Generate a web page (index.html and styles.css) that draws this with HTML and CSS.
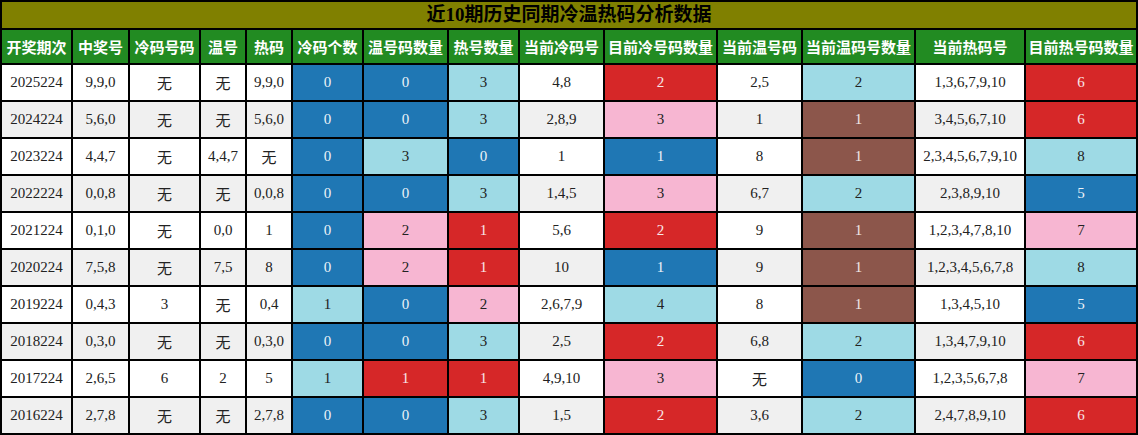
FILE: index.html
```html
<!DOCTYPE html>
<html lang="zh">
<head>
<meta charset="utf-8">
<title>近10期历史同期冷温热码分析数据</title>
<link rel="stylesheet" href="styles.css">
</head>
<body>
<table class="data">
<colgroup>
<col class="c71"><col class="c57"><col class="c71"><col class="c46"><col class="c46"><col class="c71"><col class="c85"><col class="c71"><col class="c85"><col class="c113"><col class="c85"><col class="c113"><col class="c110"><col class="c114">
</colgroup>
<thead>
<tr><th class="title" colspan="14">近10期历史同期冷温热码分析数据</th></tr>
<tr class="head">
<th>开奖期次</th><th>中奖号</th><th>冷码号码</th><th>温号</th><th>热码</th><th>冷码个数</th><th>温号码数量</th><th>热号数量</th><th>当前冷码号</th><th>目前冷号码数量</th><th>当前温号码</th><th>当前温码号数量</th><th>当前热码号</th><th>目前热号码数量</th>
</tr>
</thead>
<tbody>
<tr><td>2025224</td><td>9,9,0</td><td>无</td><td>无</td><td>9,9,0</td><td class="db">0</td><td class="db">0</td><td class="lb">3</td><td>4,8</td><td class="rd">2</td><td>2,5</td><td class="lb">2</td><td>1,3,6,7,9,10</td><td class="rd">6</td></tr>
<tr><td>2024224</td><td>5,6,0</td><td>无</td><td>无</td><td>5,6,0</td><td class="db">0</td><td class="db">0</td><td class="lb">3</td><td>2,8,9</td><td class="pk">3</td><td>1</td><td class="br">1</td><td>3,4,5,6,7,10</td><td class="rd">6</td></tr>
<tr><td>2023224</td><td>4,4,7</td><td>无</td><td>4,4,7</td><td>无</td><td class="db">0</td><td class="lb">3</td><td class="db">0</td><td>1</td><td class="db">1</td><td>8</td><td class="br">1</td><td>2,3,4,5,6,7,9,10</td><td class="lb">8</td></tr>
<tr><td>2022224</td><td>0,0,8</td><td>无</td><td>无</td><td>0,0,8</td><td class="db">0</td><td class="db">0</td><td class="lb">3</td><td>1,4,5</td><td class="pk">3</td><td>6,7</td><td class="lb">2</td><td>2,3,8,9,10</td><td class="db">5</td></tr>
<tr><td>2021224</td><td>0,1,0</td><td>无</td><td>0,0</td><td>1</td><td class="db">0</td><td class="pk">2</td><td class="rd">1</td><td>5,6</td><td class="rd">2</td><td>9</td><td class="br">1</td><td>1,2,3,4,7,8,10</td><td class="pk">7</td></tr>
<tr><td>2020224</td><td>7,5,8</td><td>无</td><td>7,5</td><td>8</td><td class="db">0</td><td class="pk">2</td><td class="rd">1</td><td>10</td><td class="db">1</td><td>9</td><td class="br">1</td><td>1,2,3,4,5,6,7,8</td><td class="lb">8</td></tr>
<tr><td>2019224</td><td>0,4,3</td><td>3</td><td>无</td><td>0,4</td><td class="lb">1</td><td class="db">0</td><td class="pk">2</td><td>2,6,7,9</td><td class="lb">4</td><td>8</td><td class="br">1</td><td>1,3,4,5,10</td><td class="db">5</td></tr>
<tr><td>2018224</td><td>0,3,0</td><td>无</td><td>无</td><td>0,3,0</td><td class="db">0</td><td class="db">0</td><td class="lb">3</td><td>2,5</td><td class="rd">2</td><td>6,8</td><td class="lb">2</td><td>1,3,4,7,9,10</td><td class="rd">6</td></tr>
<tr><td>2017224</td><td>2,6,5</td><td>6</td><td>2</td><td>5</td><td class="lb">1</td><td class="rd">1</td><td class="rd">1</td><td>4,9,10</td><td class="pk">3</td><td>无</td><td class="db">0</td><td>1,2,3,5,6,7,8</td><td class="pk">7</td></tr>
<tr><td>2016224</td><td>2,7,8</td><td>无</td><td>无</td><td>2,7,8</td><td class="db">0</td><td class="db">0</td><td class="lb">3</td><td>1,5</td><td class="rd">2</td><td>3,6</td><td class="lb">2</td><td>2,4,7,8,9,10</td><td class="rd">6</td></tr>
</tbody>
</table>
</body>
</html>
```
FILE: styles.css
```css
html, body {
  margin: 0;
  padding: 0;
  background: #ffffff;
}
.data {
  width: 1138px;
  table-layout: fixed;
  border-collapse: separate;
  border-spacing: 0;
  border: 1px solid #000;
  font-family: "Liberation Serif", "Noto Sans CJK SC", serif;
  font-size: 15px;
  color: #222;
}
.c46 { width: 46px; }
.c57 { width: 57px; }
.c71 { width: 71px; }
.c85 { width: 85px; }
.c110 { width: 110px; }
.c113 { width: 113px; }
.c114 { width: 112px; }
.data th, .data td {
  border: 1px solid #000;
  padding: 0;
  text-align: center;
  white-space: nowrap;
  overflow: hidden;
}
.title {
  background: #808000;
  color: #000;
  height: 26px;
  font-size: 19px;
  font-weight: bold;
  font-family: "Liberation Serif", "Noto Sans CJK SC", serif;
  line-height: 26px;
}
.head th {
  background: #228b22;
  color: #fff;
  height: 33px;
  font-family: "Noto Sans CJK SC", sans-serif;
  font-size: 15px;
  font-weight: bold;
}
.data tbody td {
  height: 35px;
  background: #fff;
}
.data tbody tr:nth-child(even) td {
  background: #f0f0f0;
}
.data tbody tr td.db { background: #1f77b4; color: #eef3f8; }
.data tbody tr td.lb { background: #9edae5; color: #222; }
.data tbody tr td.rd { background: #d62728; color: #f8e8e8; }
.data tbody tr td.pk { background: #f7b6d2; color: #222; }
.data tbody tr td.br { background: #8c564b; color: #f0e8e6; }
```
